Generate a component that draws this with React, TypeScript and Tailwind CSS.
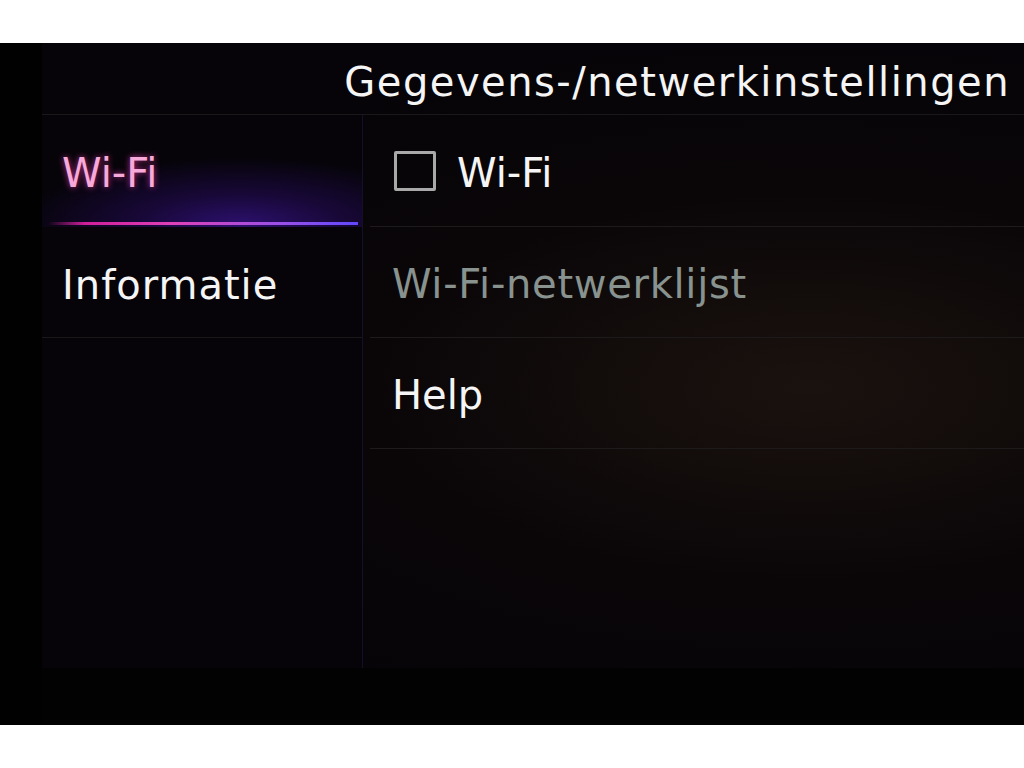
import React from "react";

const FONT = { fontFamily: '"DejaVu Sans", "Liberation Sans", sans-serif' };

const RIGHT_ROWS = [
  { label: "Wi-Fi", check: true, dim: false },
  { label: "Wi-Fi-netwerklijst", check: false, dim: true },
  { label: "Help", check: false, dim: false },
] as const;

function Checkbox() {
  return <span className="w-[42px] h-[40px] border-[3px] border-[#a9a9a9] rounded-[2px] shrink-0" />;
}

export default function App() {
  return (
    <div className="w-[1024px] h-[768px] bg-white flex flex-col" style={FONT}>
      <div className="h-[43px] shrink-0" />

      <div className="h-[682px] shrink-0 bg-[#030203] flex">
        {/* bezel */}
        <div className="w-[42px] shrink-0 bg-[#020102]" />

        <div className="flex-1 flex flex-col">
          <div className="h-[625px] flex flex-col bg-[radial-gradient(ellipse_at_78%_55%,#1a120e_0%,#0a0608_40%,#060408_75%)]">
            {/* header */}
            <div className="h-[72px] shrink-0 flex items-center justify-end pr-[14px] pt-[6px] border-b border-[#1a1819]">
              <h1 className="text-[40px] leading-none text-[#f5f5f5] tracking-[1.5px]">
                Gegevens-/netwerkinstellingen
              </h1>
            </div>

            <div className="flex-1 flex">
              {/* left menu */}
              <nav className="w-[321px] shrink-0 border-r border-[#13112a] bg-[#060409]">
                <div className="relative h-[112px] flex items-center pl-[20px] pt-[4px] bg-[radial-gradient(ellipse_70%_60%_at_62%_98%,#2c106e_0%,#180838_45%,transparent_100%)]">
                  <span className="text-[40px] leading-none text-[#f7a9d9] [text-shadow:0_0_6px_#c0308f]">
                    Wi-Fi
                  </span>
                  <span className="absolute left-[6px] right-[4px] bottom-[2px] h-[3px] bg-[linear-gradient(to_right,transparent_0%,#d01e9a_12%,#e040b8_40%,#9a50e8_75%,#6048ff_100%)]" />
                </div>
                <div className="h-[111px] flex items-center pl-[20px] pt-[6px] border-b border-[#1a1719]">
                  <span className="text-[40px] leading-none text-[#f5f5f5] tracking-[1px]">Informatie</span>
                </div>
              </nav>

              {/* right list */}
              <div className="flex-1 flex flex-col">
                {RIGHT_ROWS.map((r, i) => (
                  <div
                    key={r.label}
                    className={
                      "ml-[7px] flex items-center border-b border-[#1d1a1b] " +
                      (r.check ? "pl-[24px] gap-[21px]" : "pl-[22px] pt-[4px]") +
                      (i === 0 ? " h-[112px]" : " h-[111px]")
                    }
                  >
                    {r.check && <Checkbox />}
                    <span
                      className={
                        "text-[40px] leading-none " +
                        (r.check ? "pt-[4px] " : "") +
                        (r.dim ? "text-[#88928f] tracking-[0.7px]" : "text-[#f5f5f5]")
                      }
                    >
                      {r.label}
                    </span>
                  </div>
                ))}
              </div>
            </div>
          </div>
          {/* bottom bezel */}
          <div className="flex-1 bg-[#020202]" />
        </div>
      </div>

      <div className="flex-1" />
    </div>
  );
}
